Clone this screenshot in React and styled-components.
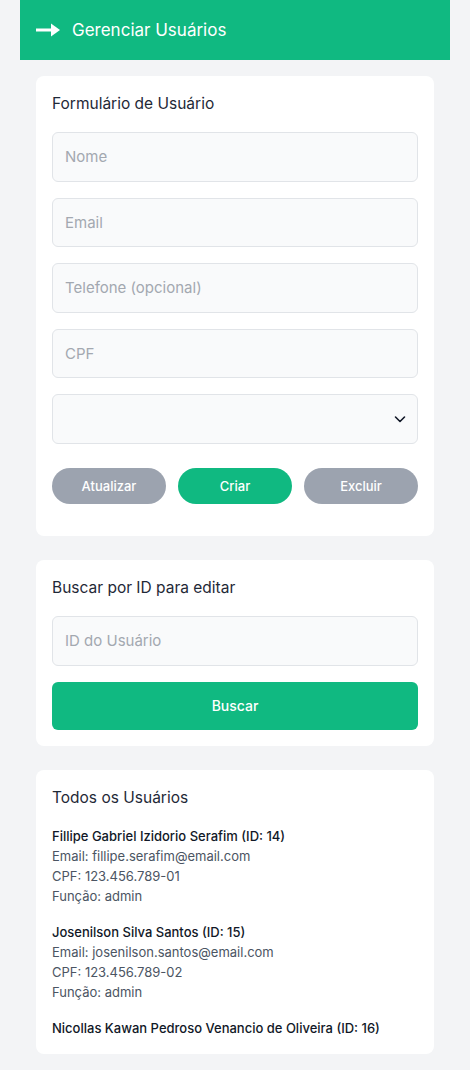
import React from 'react';
import styled, { createGlobalStyle } from 'styled-components';

const GlobalStyle = createGlobalStyle`
  body {
    margin: 0;
    background: #f3f4f6;
    font-family: Inter, "Noto Sans", sans-serif;
    color: #1f2937;
  }
  * { box-sizing: border-box; }
`;

const Page = styled.div`
  padding: 0 20px 16px;
`;

const Header = styled.header`
  height: 60px;
  background: #10b981;
  display: flex;
  align-items: center;
  gap: 12px;
  padding: 0 16px;
  color: #fff;
  font-size: 17px;
`;

const Content = styled.main`
  padding: 16px 16px 0;
  display: flex;
  flex-direction: column;
  gap: 24px;
`;

const Card = styled.section`
  background: #fff;
  border-radius: 8px;
  padding: 16px 16px ${(p) => (p.$bottom ? p.$bottom : 16)}px;
  display: flex;
  flex-direction: column;
`;

const CardTitle = styled.h2`
  margin: 0 0 16px;
  font-size: 15.5px;
  font-weight: 400;
  line-height: 24px;
  color: #1f2937;
`;

const Fields = styled.div`
  display: flex;
  flex-direction: column;
  gap: 16px;
`;

const Input = styled.input`
  height: 49.6px;
  width: 100%;
  border: 1px solid #e1e4e8;
  border-radius: 6px;
  background: #f9fafb;
  padding: 0 12px;
  font-family: inherit;
  font-size: 15px;
  color: #1f2937;
  outline: none;
  &::placeholder { color: #a3a8b0; }
`;

const SelectBox = styled.div`
  height: 49.6px;
  border: 1px solid #e1e4e8;
  border-radius: 6px;
  background: #f9fafb;
  display: flex;
  align-items: center;
  justify-content: flex-end;
  padding: 0 10px;
`;

const ButtonRow = styled.div`
  display: grid;
  grid-template-columns: repeat(3, 1fr);
  gap: 12px;
  margin-top: 24px;
`;

const PillButton = styled.button`
  height: 36px;
  border: none;
  border-radius: 999px;
  background: ${(p) => (p.$primary ? '#10b981' : '#9ca3af')};
  color: #fff;
  font-family: inherit;
  font-size: 13px;
  font-weight: 500;
`;

const WideButton = styled.button`
  height: 48px;
  margin-top: 16px;
  border: none;
  border-radius: 6px;
  background: #10b981;
  color: #fff;
  font-family: inherit;
  font-size: 14px;
  font-weight: 500;
`;

const UserList = styled.ul`
  list-style: none;
  margin: 0;
  padding: 0;
  display: flex;
  flex-direction: column;
  gap: 16px;
`;

const UserItem = styled.li`
  display: flex;
  flex-direction: column;
`;

const UserName = styled.span`
  font-size: 13px;
  font-weight: 500;
  line-height: 20px;
  color: #111827;
`;

const UserInfo = styled.span`
  font-size: 13px;
  line-height: 20px;
  color: #4b5563;
`;

const users = [
  { id: 14, name: 'Fillipe Gabriel Izidorio Serafim', email: 'fillipe.serafim@email.com', cpf: '123.456.789-01', role: 'admin' },
  { id: 15, name: 'Josenilson Silva Santos', email: 'josenilson.santos@email.com', cpf: '123.456.789-02', role: 'admin' },
  { id: 16, name: 'Nicollas Kawan Pedroso Venancio de Oliveira' },
];

const Arrow = () => (
  <svg width="24" height="16" viewBox="0 0 24 16">
    <rect x="0" y="6.5" width="16" height="3" fill="#fff" />
    <path d="M15 1.5 L24 8 L15 14.5 Z" fill="#fff" />
  </svg>
);

const Chevron = () => (
  <svg width="14" height="14" viewBox="0 0 14 14">
    <path d="M2.5 5 L7 9.5 L11.5 5" fill="none" stroke="#111827" strokeWidth="1.6" strokeLinecap="round" strokeLinejoin="round" />
  </svg>
);

export default function App() {
  return (
    <Page>
      <GlobalStyle />
      <Header>
        <Arrow />
        <span>Gerenciar Usuários</span>
      </Header>
      <Content>
        <Card $bottom={32}>
          <CardTitle>Formulário de Usuário</CardTitle>
          <Fields>
            <Input placeholder="Nome" />
            <Input placeholder="Email" />
            <Input placeholder="Telefone (opcional)" />
            <Input placeholder="CPF" />
            <SelectBox>
              <Chevron />
            </SelectBox>
          </Fields>
          <ButtonRow>
            <PillButton>Atualizar</PillButton>
            <PillButton $primary>Criar</PillButton>
            <PillButton>Excluir</PillButton>
          </ButtonRow>
        </Card>

        <Card>
          <CardTitle>Buscar por ID para editar</CardTitle>
          <Input placeholder="ID do Usuário" />
          <WideButton>Buscar</WideButton>
        </Card>

        <Card>
          <CardTitle>Todos os Usuários</CardTitle>
          <UserList>
            {users.map((u) => (
              <UserItem key={u.id}>
                <UserName>{u.name} (ID: {u.id})</UserName>
                {u.email && <UserInfo>Email: {u.email}</UserInfo>}
                {u.cpf && <UserInfo>CPF: {u.cpf}</UserInfo>}
                {u.role && <UserInfo>Função: {u.role}</UserInfo>}
              </UserItem>
            ))}
          </UserList>
        </Card>
      </Content>
    </Page>
  );
}
